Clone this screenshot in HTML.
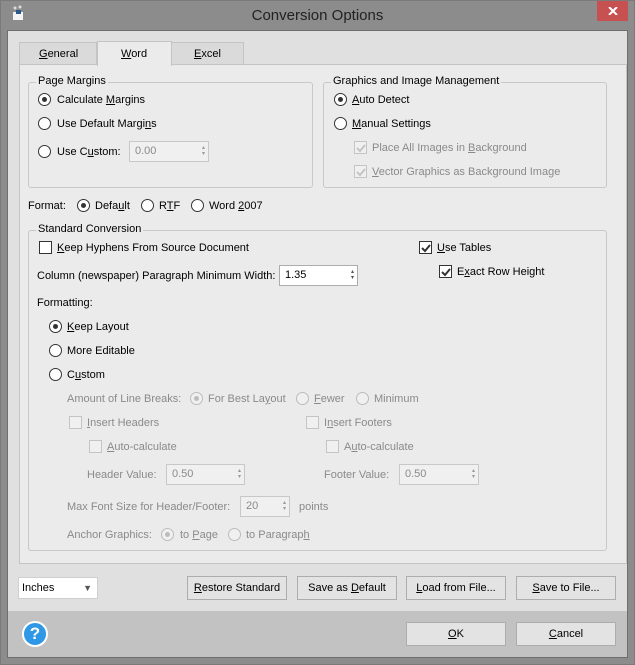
<!DOCTYPE html><html><head><meta charset="utf-8"><style>
*{margin:0;padding:0;box-sizing:border-box}
body{width:635px;height:665px;background:#8c8c8c;position:relative;overflow:hidden;font-family:"Liberation Sans",sans-serif;font-size:11px;color:#000}
.a{position:absolute}
.t{position:absolute;line-height:14px;white-space:nowrap;font-size:11px}
.d{color:#8a8a8a}
.r{position:absolute;width:13px;height:13px;border:1px solid #333;border-radius:50%;background:#fff}
.r.on::after{content:"";position:absolute;left:3px;top:3px;width:5px;height:5px;border-radius:50%;background:#333}
.r.dis{border-color:#bcbcbc;background:#f0f0f0}
.r.dis.on::after{background:#bcbcbc}
.c{position:absolute;width:13px;height:13px;border:1px solid #333;background:#fff}
.c.dis{border-color:#c4c4c4;background:#f0f0f0}
.c svg{position:absolute;left:0;top:0}
.g{position:absolute;border:1px solid #c8c8c8;border-radius:3px}
.gl{position:absolute;background:#ebebeb;padding:0 2px;line-height:14px;white-space:nowrap;font-size:11px}
.in{position:absolute;border:1px solid #adadad;background:#fff;line-height:18px;padding-left:5px;font-size:11px}
.in.dis{border-color:#c8c8c8;background:#f0f0f0;color:#8a8a8a}
.sp{position:absolute;right:3px;top:3px;font-size:6px;line-height:6px;color:#999}
.b{position:absolute;border:1px solid #adadad;background:#e3e3e3;text-align:center;line-height:22px;height:24px;width:100px;font-size:11px}
u{text-decoration:underline}
</style></head><body>
<div class="a" style="left:0;top:0;width:635px;height:665px;border:1px solid #7a7a7a"></div>
<svg class="a" style="left:10px;top:4px" width="16" height="18"><rect x="3" y="8" width="10" height="8" fill="#f4f4f4"/><rect x="6" y="6" width="5" height="4" fill="#2a5a8a"/><circle cx="5" cy="4" r="1.5" fill="#ddd"/><circle cx="10" cy="3" r="1.5" fill="#ddd"/></svg>
<div class="t" style="left:0;width:635px;text-align:center;top:7px;font-size:15px;line-height:18px;color:#222">Conversion Options</div>
<div class="a" style="left:597px;top:1px;width:31px;height:20px;background:#c75050"></div>
<svg class="a" style="left:608px;top:7px" width="10" height="8"><path d="M1 0L9 8M9 0L1 8" stroke="#fff" stroke-width="2"/></svg>
<div class="a" style="left:7px;top:30px;width:621px;height:628px;background:#e0e0e0;border:1px solid #6e6e6e"></div>
<div class="a" style="left:8px;top:611px;width:619px;height:46px;background:#c2c2c2"></div>
<div class="a" style="left:19px;top:42px;width:78px;height:23px;background:#dadada;border:1px solid #c4c4c4;border-bottom:none"></div>
<div class="t" style="left:39px;top:47px"><u>G</u>eneral</div>
<div class="a" style="left:171px;top:42px;width:73px;height:23px;background:#dadada;border:1px solid #c4c4c4;border-bottom:none"></div>
<div class="t" style="left:194px;top:47px"><u>E</u>xcel</div>
<div class="a" style="left:19px;top:64px;width:608px;height:500px;background:#ebebeb;border:1px solid #c4c4c4"></div>
<div class="a" style="left:97px;top:41px;width:75px;height:25px;background:#ebebeb;border:1px solid #c4c4c4;border-bottom:none"></div>
<div class="t" style="left:121px;top:47px"><u>W</u>ord</div>
<div class="g" style="left:28px;top:82px;width:285px;height:106px"></div>
<div class="gl" style="left:36px;top:74px">Page Margins</div>
<div class="r on" style="left:38px;top:93px"></div><div class="t" style="left:57px;top:93px">Calculate <u>M</u>argins</div>
<div class="r" style="left:38px;top:117px"></div><div class="t" style="left:57px;top:117px">Use Default Margi<u>n</u>s</div>
<div class="r" style="left:38px;top:145px"></div><div class="t" style="left:57px;top:145px">Use C<u>u</u>stom:</div>
<div class="in dis" style="left:129px;top:141px;width:80px;height:21px">0.00<div class="sp">▴<br>▾</div></div>
<div class="g" style="left:323px;top:82px;width:284px;height:106px"></div>
<div class="gl" style="left:331px;top:74px">Graphics and Image Management</div>
<div class="r on" style="left:334px;top:93px"></div><div class="t" style="left:352px;top:93px"><u>A</u>uto Detect</div>
<div class="r" style="left:334px;top:117px"></div><div class="t" style="left:352px;top:117px"><u>M</u>anual Settings</div>
<div class="c dis" style="left:354px;top:141px"><svg width="12" height="12"><path d="M2 6L5 9L10 3" stroke="#c4c4c4" stroke-width="2" fill="none"/></svg></div><div class="t d" style="left:372px;top:141px">Place All Images in <u>B</u>ackground</div>
<div class="c dis" style="left:354px;top:165px"><svg width="12" height="12"><path d="M2 6L5 9L10 3" stroke="#c4c4c4" stroke-width="2" fill="none"/></svg></div><div class="t d" style="left:372px;top:165px"><u>V</u>ector Graphics as Background Image</div>
<div class="t" style="left:28px;top:199px">Format:</div>
<div class="r on" style="left:77px;top:199px"></div><div class="t" style="left:95px;top:199px">Defa<u>u</u>lt</div>
<div class="r" style="left:141px;top:199px"></div><div class="t" style="left:159px;top:199px">R<u>T</u>F</div>
<div class="r" style="left:191px;top:199px"></div><div class="t" style="left:209px;top:199px">Word <u>2</u>007</div>
<div class="g" style="left:28px;top:230px;width:579px;height:321px"></div>
<div class="gl" style="left:36px;top:222px">Standard Conversion</div>
<div class="c" style="left:39px;top:241px"></div><div class="t" style="left:57px;top:241px"><u>K</u>eep Hyphens From Source Document</div>
<div class="c" style="left:419px;top:241px"><svg width="12" height="12"><path d="M2 6L5 9L10 3" stroke="#333" stroke-width="2" fill="none"/></svg></div><div class="t" style="left:437px;top:241px"><u>U</u>se Tables</div>
<div class="c" style="left:439px;top:265px"><svg width="12" height="12"><path d="M2 6L5 9L10 3" stroke="#333" stroke-width="2" fill="none"/></svg></div><div class="t" style="left:457px;top:265px">E<u>x</u>act Row Height</div>
<div class="t" style="left:37px;top:269px">Column (newspaper) Paragraph Minimum Width:</div>
<div class="in" style="left:279px;top:265px;width:79px;height:21px">1.35<div class="sp" style="color:#555">▴<br>▾</div></div>
<div class="t" style="left:37px;top:296px">Formatting:</div>
<div class="r on" style="left:49px;top:320px"></div><div class="t" style="left:67px;top:320px"><u>K</u>eep Layout</div>
<div class="r" style="left:49px;top:344px"></div><div class="t" style="left:67px;top:344px">More Editable</div>
<div class="r" style="left:49px;top:368px"></div><div class="t" style="left:67px;top:368px">C<u>u</u>stom</div>
<div class="t d" style="left:67px;top:392px">Amount of Line Breaks:</div>
<div class="r dis on" style="left:190px;top:392px"></div><div class="t d" style="left:208px;top:392px">For Best La<u>y</u>out</div>
<div class="r dis" style="left:296px;top:392px"></div><div class="t d" style="left:314px;top:392px"><u>F</u>ewer</div>
<div class="r dis" style="left:356px;top:392px"></div><div class="t d" style="left:374px;top:392px">Minimum</div>
<div class="c dis" style="left:69px;top:416px"></div><div class="t d" style="left:87px;top:416px"><u>I</u>nsert Headers</div>
<div class="c dis" style="left:306px;top:416px"></div><div class="t d" style="left:324px;top:416px">I<u>n</u>sert Footers</div>
<div class="c dis" style="left:89px;top:440px"></div><div class="t d" style="left:107px;top:440px"><u>A</u>uto-calculate</div>
<div class="c dis" style="left:326px;top:440px"></div><div class="t d" style="left:344px;top:440px">A<u>u</u>to-calculate</div>
<div class="t d" style="left:87px;top:468px">Header Value:</div>
<div class="in dis" style="left:166px;top:464px;width:79px;height:21px">0.50<div class="sp">▴<br>▾</div></div>
<div class="t d" style="left:324px;top:468px">Footer Value:</div>
<div class="in dis" style="left:399px;top:464px;width:80px;height:21px">0.50<div class="sp">▴<br>▾</div></div>
<div class="t d" style="left:67px;top:500px">Max Font Size for Header/Footer:</div>
<div class="in dis" style="left:240px;top:496px;width:50px;height:21px">20<div class="sp">▴<br>▾</div></div>
<div class="t d" style="left:299px;top:500px">points</div>
<div class="t d" style="left:67px;top:528px">Anchor Graphics:</div>
<div class="r dis on" style="left:161px;top:528px"></div><div class="t d" style="left:180px;top:528px">to <u>P</u>age</div>
<div class="r dis" style="left:228px;top:528px"></div><div class="t d" style="left:246px;top:528px">to Paragrap<u>h</u></div>
<div class="in" style="left:18px;top:577px;width:80px;height:22px;border-color:#d0d0d0;padding-left:3px;line-height:20px">Inches<span class="a" style="right:5px;top:0;font-size:9px;color:#555">▼</span></div>
<div class="b" style="left:187px;top:576px"><u>R</u>estore Standard</div>
<div class="b" style="left:297px;top:576px">Save as <u>D</u>efault</div>
<div class="b" style="left:406px;top:576px"><u>L</u>oad from File...</div>
<div class="b" style="left:516px;top:576px"><u>S</u>ave to File...</div>
<div class="b" style="left:406px;top:622px"><u>O</u>K</div>
<div class="b" style="left:516px;top:622px"><u>C</u>ancel</div>
<div class="a" style="left:22px;top:621px;width:26px;height:26px;border-radius:50%;background:#2f98e6;border:2px solid #fff;color:#fff;font-weight:bold;font-size:17px;text-align:center;line-height:22px">?</div>
</body></html>
